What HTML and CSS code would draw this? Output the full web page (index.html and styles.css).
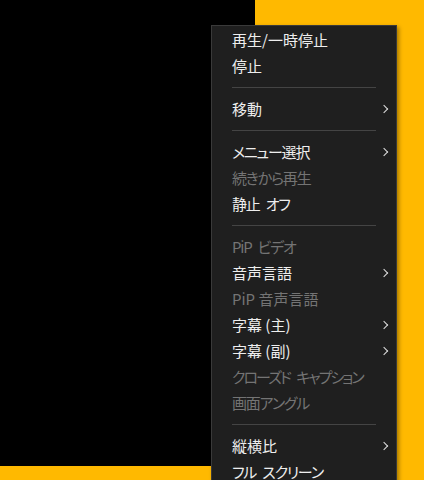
FILE: index.html
```html
<!DOCTYPE html>
<html lang="ja">
<head>
  <meta charset="UTF-8">
  <meta name="viewport" content="width=device-width, initial-scale=1.0">
  <link rel="stylesheet" href="styles.css">
  <title>メディア プレーヤー</title>
</head>
<body>
  <div class="desktop">
    <div class="video"></div>

    <ul class="menu">
      <li class="item">再生/一時停止</li>
      <li class="item">停止</li>
      <li class="sep"></li>
      <li class="item sub">移動</li>
      <li class="sep"></li>
      <li class="item sub kana">メニュー選択</li>
      <li class="item off kana">続きから再生</li>
      <li class="item kana">静止 オフ</li>
      <li class="sep"></li>
      <li class="item off kana">PiP ビデオ</li>
      <li class="item sub">音声言語</li>
      <li class="item off">PiP 音声言語</li>
      <li class="item sub">字幕 (主)</li>
      <li class="item sub">字幕 (副)</li>
      <li class="item off kana wide">クローズド キャプション</li>
      <li class="item off kana">画面アングル</li>
      <li class="sep"></li>
      <li class="item sub">縦横比</li>
      <li class="item kana">フル スクリーン</li>
    </ul>
  </div>
</body>
</html>
```

FILE: styles.css
```css
html, body {
  margin: 0;
  height: 100%;
  overflow: hidden;
}

body {
  background-color: #ffb900;
  font-family: "Noto Sans CJK JP", "Noto Sans", sans-serif;
}

.desktop {
  position: relative;
  height: 100%;
}

.video {
  width: 255px;
  height: 466px;
  background-color: #000;
}

/* context menu sits over the player */
.menu {
  position: absolute;
  left: 211px;
  top: 25px;
  width: 184px;
  margin: 0;
  padding: 1px 0 0 0;
  list-style: none;
  background-color: #1f1f1f;
  border: 1px solid #3a3a3a;
  box-shadow: 2px 2px 4px rgba(0, 0, 0, 0.35);
}

.item {
  position: relative;
  height: 26px;
  line-height: 26px;
  padding-left: 20px;
  font-size: 15px;
  color: #eee;
  white-space: nowrap;
  font-feature-settings: "palt";
}

/* kana runs narrower in the original UI font */
.item.kana {
  letter-spacing: -1.2px;
  word-spacing: 4px;
}

.item.wide {
  letter-spacing: -2px;
  word-spacing: 5px;
}

.item.off {
  color: #747474;
}

.item.sub::after {
  content: "";
  position: absolute;
  right: 9px;
  top: 10px;
  width: 5px;
  height: 5px;
  border-right: 1.5px solid #e0e0e0;
  border-top: 1.5px solid #e0e0e0;
  transform: rotate(45deg);
}

.sep {
  height: 1px;
  margin: 8px 20px 8px 20px;
  background-color: #444;
}
```
